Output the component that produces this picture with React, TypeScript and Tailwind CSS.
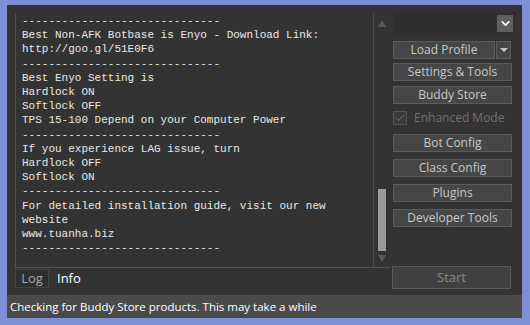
import { Check, ChevronDown } from "lucide-react";

const logLines = [
  "------------------------------",
  "Best Non-AFK Botbase is Enyo - Download Link:",
  "http://goo.gl/51E0F6",
  "------------------------------",
  "Best Enyo Setting is",
  "Hardlock ON",
  "Softlock OFF",
  "TPS 15-100 Depend on your Computer Power",
  "------------------------------",
  "If you experience LAG issue, turn",
  "Hardlock OFF",
  "Softlock ON",
  "------------------------------",
  "For detailed installation guide, visit our new",
  "website",
  "www.tuanha.biz",
  "------------------------------",
];

const ui = { fontFamily: '"Open Sans", "Noto Sans", sans-serif' };

function Btn({ label, className = "" }: { label: string; className?: string }) {
  return (
    <button
      className={`flex h-[18px] items-center justify-center border border-[#5c5c5c] bg-[#464646] text-[12px] leading-none text-[#c8c8c8] ${className}`}
      style={ui}
    >
      {label}
    </button>
  );
}

export default function App() {
  return (
    <div className="h-[325px] w-[530px] bg-[#7f8fd5] pb-[7px] pl-[7px] pr-[8px] pt-[5px]">
      <div className="flex h-full flex-col bg-[#333333]">
        <div className="flex flex-1">
          {/* log column */}
          <div className="flex w-[383px] flex-col pl-[8px] pt-[8px]">
            <div className="flex h-[255px] border-b border-l border-[#505050] bg-[#333333]">
              <pre
                className="flex-1 overflow-hidden pl-[6px] pt-[1px] text-[11px] leading-[14.2px] text-[#e8e8e8]"
                style={{ fontFamily: '"Liberation Mono", "DejaVu Sans Mono", monospace' }}
              >
                {logLines.join("\n")}
              </pre>
              <div className="flex w-[17px] flex-col items-center border-l border-[#4a4a4a]">
                <div className="mt-[7px] h-0 w-0 border-x-[4px] border-b-[7px] border-x-transparent border-b-[#5a5a5a]" />
                <div className="flex-1" />
                <div className="h-[62px] w-[8px] bg-[#9a9a9a]" />
                <div className="mb-[5px] mt-[4px] h-0 w-0 border-x-[4px] border-t-[7px] border-x-transparent border-t-[#5a5a5a]" />
              </div>
            </div>
            <div className="flex h-[27px] items-start pt-[1px] text-[13px]" style={ui}>
              <div className="flex h-[19px] w-[34px] items-center justify-center border border-[#444] bg-[#2e2e2e] text-[#a8a8a8]">
                Log
              </div>
              <div className="flex h-[19px] items-center px-[8px] text-white">Info</div>
            </div>
          </div>

          {/* right panel */}
          <div className="flex flex-1 flex-col pl-[3px] pr-[7px] pt-[7px]">
            <div className="flex h-[23px] items-center justify-end bg-[#2f2f2f] pr-[2px]">
              <div className="flex h-[17px] w-[16px] items-center justify-center bg-[#5f5f5f]">
                <ChevronDown size={13} strokeWidth={3} className="text-white" />
              </div>
            </div>
            <div className="mt-[6px] flex gap-[1px]">
              <Btn label="Load Profile" className="w-[102px]" />
              <div className="flex h-[18px] w-[15px] items-center justify-center border border-[#5c5c5c] bg-[#464646]">
                <div className="h-0 w-0 border-x-[4px] border-t-[4px] border-x-transparent border-t-[#c8c8c8]" />
              </div>
            </div>
            <Btn label="Settings & Tools" className="mt-[4px] w-[119px]" />
            <Btn label="Buddy Store" className="mt-[5px] w-[119px]" />
            <div className="mt-[6px] flex h-[16px] items-center gap-[7px]" style={ui}>
              <div className="flex h-[14px] w-[14px] items-center justify-center border border-[#555] bg-[#3a3a3a]">
                <Check size={12} strokeWidth={2} className="text-[#707070]" />
              </div>
              <span className="text-[12px] text-[#707070]">Enhanced Mode</span>
            </div>
            <Btn label="Bot Config" className="mt-[8px] w-[119px]" />
            <Btn label="Class Config" className="mt-[7px] w-[119px]" />
            <Btn label="Plugins" className="mt-[7px] w-[119px]" />
            <Btn label="Developer Tools" className="mt-[7px] w-[119px]" />
            <div className="flex-1" />
            <button
              className="mb-[6px] ml-[-1px] flex h-[23px] w-[119px] items-center justify-center border border-[#5a5a5a] bg-[#404040] text-[13px] text-[#8a8a8a]"
              style={ui}
            >
              Start
            </button>
          </div>
        </div>

        {/* status bar */}
        <div
          className="flex h-[23px] items-center bg-[#4a4a4a] pl-[3px] text-[11.5px] text-white"
          style={ui}
        >
          Checking for Buddy Store products. This may take a while
        </div>
      </div>
    </div>
  );
}
